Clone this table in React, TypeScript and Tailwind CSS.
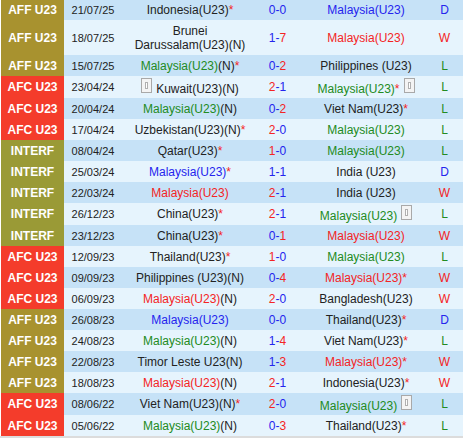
import React from "react";

type Row = {
  comp: "AFF" | "AFC" | "INTERF";
  date: string;
  home: React.ReactNode;
  hs: number;
  as: number;
  away: React.ReactNode;
  res: "W" | "L" | "D";
  h: string;
};

const G = "text-[#228b22]";
const R = "text-[#f42424]";
const B = "text-[#2424ee]";

const Star = () => <span className="text-[#f42424]">*</span>;
const Ic = ({ cls = "" }: { cls?: string }) => (
  <span className={`inline-block w-[11px] h-[15px] border border-[#a9a9a9] bg-[#f4f4f4] relative align-baseline ${cls}`}>
    <span className="absolute left-[3px] top-[3px] w-[3px] h-[7px] border border-[#b0b0b0] bg-white" />
  </span>
);
const M = ({ c }: { c: string }) => <span className={c}>Malaysia(U23)</span>;

const rows: Row[] = [
  { comp: "AFF", date: "21/07/25", home: <>Indonesia(U23)<Star /></>, hs: 0, as: 0, away: <M c={B} />, res: "D", h: "h-[20px]" },
  { comp: "AFF", date: "18/07/25", home: <>Brunei<br />Darussalam(U23)(N)</>, hs: 1, as: 7, away: <M c={R} />, res: "W", h: "h-[35px]" },
  { comp: "AFF", date: "15/07/25", home: <><M c={G} />(N)<Star /></>, hs: 0, as: 2, away: <>Philippines (U23)</>, res: "L", h: "h-[21px]" },
  { comp: "AFC", date: "23/04/24", home: <><Ic cls="mr-[4px]" />Kuwait(U23)(N)</>, hs: 2, as: 1, away: <><M c={G} /><Star /><Ic cls="ml-[4px]" /></>, res: "L", h: "h-[22px]" },
  { comp: "AFC", date: "20/04/24", home: <><M c={G} />(N)</>, hs: 0, as: 2, away: <>Viet Nam(U23)<Star /></>, res: "L", h: "h-[21px]" },
  { comp: "AFC", date: "17/04/24", home: <>Uzbekistan(U23)(N)<Star /></>, hs: 2, as: 0, away: <M c={G} />, res: "L", h: "h-[21px]" },
  { comp: "INTERF", date: "08/04/24", home: <>Qatar(U23)<Star /></>, hs: 1, as: 0, away: <M c={G} />, res: "L", h: "h-[21px]" },
  { comp: "INTERF", date: "25/03/24", home: <><M c={B} /><Star /></>, hs: 1, as: 1, away: <>India (U23)</>, res: "D", h: "h-[21px]" },
  { comp: "INTERF", date: "22/03/24", home: <M c={R} />, hs: 2, as: 1, away: <>India (U23)</>, res: "W", h: "h-[21px]" },
  { comp: "INTERF", date: "26/12/23", home: <>China(U23)<Star /></>, hs: 2, as: 1, away: <><M c={G} /><Ic cls="ml-[4px]" /></>, res: "L", h: "h-[22px]" },
  { comp: "INTERF", date: "23/12/23", home: <>China(U23)<Star /></>, hs: 0, as: 1, away: <M c={R} />, res: "W", h: "h-[21px]" },
  { comp: "AFC", date: "12/09/23", home: <>Thailand(U23)<Star /></>, hs: 1, as: 0, away: <M c={G} />, res: "L", h: "h-[21px]" },
  { comp: "AFC", date: "09/09/23", home: <>Philippines (U23)(N)</>, hs: 0, as: 4, away: <><M c={R} /><Star /></>, res: "W", h: "h-[21px]" },
  { comp: "AFC", date: "06/09/23", home: <><M c={R} />(N)</>, hs: 2, as: 0, away: <>Bangladesh(U23)</>, res: "W", h: "h-[21px]" },
  { comp: "AFF", date: "26/08/23", home: <M c={B} />, hs: 0, as: 0, away: <>Thailand(U23)<Star /></>, res: "D", h: "h-[21px]" },
  { comp: "AFF", date: "24/08/23", home: <><M c={G} />(N)</>, hs: 1, as: 4, away: <>Viet Nam(U23)<Star /></>, res: "L", h: "h-[21px]" },
  { comp: "AFF", date: "22/08/23", home: <>Timor Leste U23(N)</>, hs: 1, as: 3, away: <><M c={R} /><Star /></>, res: "W", h: "h-[21px]" },
  { comp: "AFF", date: "18/08/23", home: <><M c={R} />(N)</>, hs: 2, as: 1, away: <>Indonesia(U23)<Star /></>, res: "W", h: "h-[21px]" },
  { comp: "AFC", date: "08/06/22", home: <>Viet Nam(U23)(N)<Star /></>, hs: 2, as: 0, away: <><M c={G} /><Ic cls="ml-[4px]" /></>, res: "L", h: "h-[22px]" },
  { comp: "AFC", date: "05/06/22", home: <><M c={G} />(N)</>, hs: 0, as: 3, away: <>Thailand(U23)<Star /></>, res: "L", h: "h-[21px]" },
];

const compBg: Record<Row["comp"], string> = {
  AFF: "bg-[#a8922f]",
  AFC: "bg-[#f43c2b]",
  INTERF: "bg-[#9a9a36]",
};
const compLabel: Record<Row["comp"], string> = {
  AFF: "AFF U23",
  AFC: "AFC U23",
  INTERF: "INTERF",
};
const resCls: Record<Row["res"], string> = {
  W: "text-[#f42424]",
  L: "text-[#228b22]",
  D: "text-[#2424ee]",
};

const goalCls = (a: number, b: number) => (a > b ? "text-[#f42424]" : "text-[#2424ee]");

export default function App() {
  return (
    <div className="w-[463px] h-[442px] bg-white" style={{ fontFamily: '"Liberation Sans", Arial, sans-serif' }}>
      <div className="pl-[1px] border-b-2 border-[#dcdcdc]">
        {rows.map((r, i) => (
          <div key={i} className={`flex items-center ${r.h} ${i % 2 === 0 ? "bg-[#c6e2f7]" : "bg-[#e6f4fd]"} text-[#222] leading-[14px]`}>
            <div className={`w-[63px] h-full flex items-center justify-center text-white font-bold text-[12px] ${compBg[r.comp]}`}>
              {compLabel[r.comp]}
            </div>
            <div className="w-[58px] text-center text-[11px]">{r.date}</div>
            <div className="w-[136px] text-center text-[12px]">{r.home}</div>
            <div className="w-[39px] text-center text-[12px] text-[#2424ee]">
              <span className={goalCls(r.hs, r.as)}>{r.hs}</span>-<span className={goalCls(r.as, r.hs)}>{r.as}</span>
            </div>
            <div className="w-[138px] text-center text-[12px]">{r.away}</div>
            <div className={`w-[19px] text-center text-[12px] ${resCls[r.res]}`}>{r.res}</div>
          </div>
        ))}
      </div>
    </div>
  );
}
